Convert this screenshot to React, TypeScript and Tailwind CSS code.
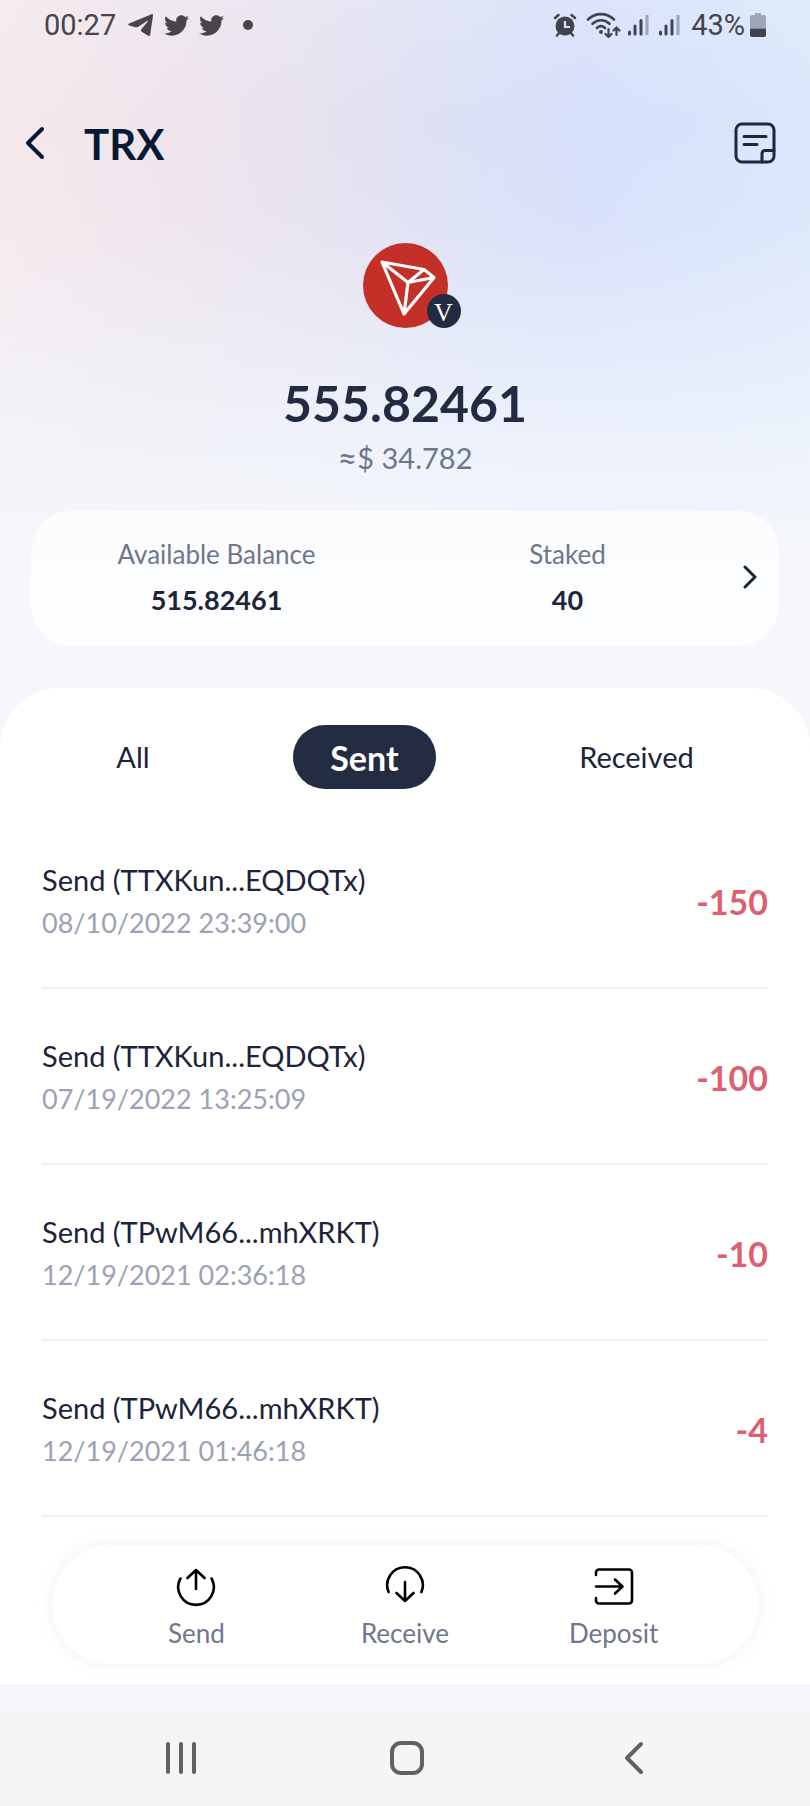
import React, { useState } from "react";
import { FaTwitter } from "react-icons/fa";

interface Transaction {
  address: string;
  date: string;
  amount: string;
}

const transactions: Transaction[] = [
  { address: "TTXKun...EQDQTx", date: "08/10/2022 23:39:00", amount: "-150" },
  { address: "TTXKun...EQDQTx", date: "07/19/2022 13:25:09", amount: "-100" },
  { address: "TPwM66...mhXRKT", date: "12/19/2021 02:36:18", amount: "-10" },
  { address: "TPwM66...mhXRKT", date: "12/19/2021 01:46:18", amount: "-4" },
];

const tabs = ["All", "Sent", "Received"];

function SignalIcon() {
  return (
    <svg width="22" height="24" viewBox="0 0 22 24" strokeWidth="3" strokeLinecap="round" stroke="currentColor">
      <path d="M2.5 19v2M8 13v8M14 7.500v13.500" />
      <path d="M20 2v20" opacity="0.4" strokeLinecap="butt" />
    </svg>
  );
}

function StatusBar() {
  return (
    <div className="flex h-[50px] items-center justify-between px-[44px] font-[Roboto,sans-serif] text-[29px] leading-none text-[#47454b]">
      <div className="flex items-center">
        <span>00:27</span>
        <svg className="ml-3" width="25" height="24" viewBox="0 0 25 24" fill="currentColor">
          <path d="M23.500 1.200c.9-.4 1.700.2 1.500 1.200l-2.800 19.400c-.1 1-1.200 1.400-2 .9l-6.400-3.900c-1.100-.7-1.200-2-.3-2.900l6.300-7.400c.5-.6-.1-1-.7-.6l-8.800 5.900c-1 .6-2 .7-3.100.4l-5.900-1.700c-1.400-.4-1.500-1.300-.1-2z" />
        </svg>
        <FaTwitter className="ml-[11px] size-[25px]" />
        <FaTwitter className="ml-[10px] size-[25px]" />
        <span className="ml-[19px] size-[10px] rounded-full bg-current" />
      </div>
      <div className="flex items-center text-[#41444e]">
        <svg width="24" height="24" viewBox="0 0 24 24" fill="currentColor" stroke="currentColor" strokeLinecap="round">
          <circle cx="12" cy="13" r="9.500" stroke="none" />
          <path d="M2 5l3.500-3M22 5l-3.500-3M6 20l-2 2.500M18 20l2 2.500" fill="none" strokeWidth="2.500" />
          <path d="M12 8v6h5" fill="none" stroke="#dce4f8" strokeWidth="2.200" strokeLinecap="butt" />
        </svg>
        <svg className="ml-[9px]" width="36" height="26" viewBox="0 0 36 26" fill="none" stroke="currentColor" strokeLinecap="round">
          <path d="M2 7.500C9.500.3 20.500.3 28 7.500M6.500 11.800c5-4.800 12-4.800 17 0M11 16c2.500-2.300 5.500-2.300 8 0" strokeWidth="2.600" />
          <circle cx="15" cy="20" r="2" fill="currentColor" stroke="none" />
          <path d="M22.500 17v8M19.500 22l3 3 3-3M30.500 23v-7.500M27.500 18.500l3-3 3 3" strokeWidth="2.200" />
        </svg>
        <span className="ml-[5px]">
          <SignalIcon />
        </span>
        <span className="ml-[9px]">
          <SignalIcon />
        </span>
        <span className="ml-[11px]">43%</span>
        <svg className="ml-[5px]" width="16" height="24" viewBox="0 0 16 24" fill="currentColor">
          <path d="M5 0h6v2h3a2 2 0 0 1 2 2v11.500H0V4a2 2 0 0 1 2-2h3z" opacity="0.4" />
          <path d="M0 15.500h16V22a2 2 0 0 1-2 2H2a2 2 0 0 1-2-2z" />
        </svg>
      </div>
    </div>
  );
}

function Header() {
  return (
    <header className="flex h-[186px] items-center justify-between pl-[24px] pr-[34px]">
      <div className="flex items-center gap-[38px]">
        <button aria-label="Back" className="cursor-pointer">
          <svg width="22" height="34" viewBox="0 0 22 34" fill="none" stroke="#071a33" strokeWidth="4" strokeLinecap="round" strokeLinejoin="round">
            <path d="M18 3L4 17l14 14" />
          </svg>
        </button>
        <h1 className="pt-[2px] text-[42px] font-bold leading-none text-[#071a33]">TRX</h1>
      </div>
      <button aria-label="Details" className="cursor-pointer">
        <svg width="42" height="42" viewBox="0 0 42 42" fill="none" stroke="#1d2740" strokeWidth="3" strokeLinecap="round" strokeLinejoin="round">
          <rect x="2" y="2" width="38" height="38" rx="6" />
          <path d="M10 14.500h22M10 22.500h13M28 40V31.500a3 3 0 0 1 3-3H40" />
        </svg>
      </button>
    </header>
  );
}

function TokenLogo() {
  return (
    <div className="relative size-[85px] rounded-full bg-[#c43027]">
      <svg width="85" height="85" viewBox="0 0 85 85" fill="none" stroke="#fff" strokeWidth="3.200" strokeLinejoin="round">
        <path d="M19 19l42 7.500 10 8L41 71zM19 19l26 20.500L71 34.500M45 39.500L61 26.500M45 39.500L41 71" />
      </svg>
      <span className="absolute -right-[13px] bottom-0 flex size-[34px] items-center justify-center rounded-full bg-[#222b42] pt-1 font-['Liberation_Serif',serif] text-[26px] leading-none text-white">
        V
      </span>
    </div>
  );
}

function Actions() {
  const iconProps = {
    width: 42,
    height: 42,
    viewBox: "0 0 42 42",
    fill: "none",
    stroke: "#000",
    strokeWidth: 2.6,
    strokeLinecap: "round" as const,
    strokeLinejoin: "round" as const,
  };

  return (
    <div className="mx-[52px] flex h-[119px] items-center justify-around rounded-full bg-white px-10 pt-[6px] text-[26px] leading-8 text-[#6d778b] shadow-[0_0_20px_rgba(0,0,0,0.06)]">
      <button className="flex w-40 cursor-pointer flex-col items-center gap-[9px]">
        <svg {...iconProps}>
          <path d="M5.400 12.500a17.800 17.800 0 1 0 31.200 0M21 23V4M12.500 12L21 4l8.500 8" />
        </svg>
        Send
      </button>
      <button className="flex w-40 cursor-pointer flex-col items-center gap-[9px]">
        <svg {...iconProps}>
          <path d="M4.600 26a17.800 17.800 0 1 1 32.800 0M21 16v19M12.500 27l8.500 8 8.500-8" />
        </svg>
        Receive
      </button>
      <button className="flex w-40 cursor-pointer flex-col items-center gap-[9px]">
        <svg {...iconProps}>
          <path d="M3 9V6.500a3 3 0 0 1 3-3h30a3 3 0 0 1 3 3v28a3 3 0 0 1-3 3H6a3 3 0 0 1-3-3V32M3 20.500h26M22 13.500l7.500 7-7.500 7" />
        </svg>
        Deposit
      </button>
    </div>
  );
}

function SystemNav() {
  return (
    <nav className="flex h-[100px] items-center justify-around bg-[#f5f5f5] pl-[68px] pr-[63px] pt-1">
      <button aria-label="Recent apps" className="flex w-10 cursor-pointer justify-center">
        <svg width="34" height="36" viewBox="0 0 34 36" fill="none" stroke="#616161" strokeWidth="4" strokeLinecap="round">
          <path d="M4 4v28M17 4v28M30 4v28" />
        </svg>
      </button>
      <button aria-label="Home" className="flex w-10 cursor-pointer justify-center">
        <svg width="34" height="34" viewBox="0 0 34 34" fill="none" stroke="#616161" strokeWidth="4">
          <rect x="2" y="2" width="30" height="30" rx="9" />
        </svg>
      </button>
      <button aria-label="Back" className="flex w-10 cursor-pointer justify-center">
        <svg width="20" height="34" viewBox="0 0 20 34" fill="none" stroke="#616161" strokeWidth="4" strokeLinecap="round" strokeLinejoin="round">
          <path d="M17 3L3 17l14 14" />
        </svg>
      </button>
    </nav>
  );
}

export default function App() {
  const [activeTab, setActiveTab] = useState<string>("Sent");

  return (
    <div className="min-h-screen bg-[#f6f7fa] bg-[linear-gradient(to_bottom,rgba(240,245,252,0.2),rgba(240,245,252,0)_120px,rgba(240,245,252,0.08)_220px,rgba(240,245,252,0.5)_350px,rgba(242,246,252,0.85)_460px,#f6f7fa_580px),linear-gradient(to_right,#f6e9ed,#efe4ec_22%,#e6e2f0_40%,#dde1f5_55%,#d7e0fa_72%,#d8e3fb_85%,#dbe7fb)] font-[Lato,sans-serif] text-[#1c2439]">
      <StatusBar />
      <Header />

      <main>
        <section className="flex flex-col items-center pt-[7px]">
          <TokenLogo />
          <p className="mt-[45px] text-[50px] font-bold leading-[60px] text-[#222b42]">555.82461</p>
          <p className="flex h-[50px] items-center text-[29px] leading-[50px] text-[#6d778b]">
            <span className="text-[34px]">≈</span>$ 34.782
          </p>
        </section>

        <section className="mx-[31px] mt-[28px] flex h-[135px] items-center rounded-[40px] bg-white/70 pb-1 pl-[10px] pr-[22px]">
          <div className="grid flex-1 grid-cols-2 text-center leading-[45px]">
            <div>
              <p className="text-[26px] text-[#6d778b]">Available Balance</p>
              <p className="text-[27px] font-bold">515.82461</p>
            </div>
            <div>
              <p className="text-[26px] text-[#6d778b]">Staked</p>
              <p className="text-[27px] font-bold">40</p>
            </div>
          </div>
          <button aria-label="Balance details" className="cursor-pointer">
            <svg width="14" height="26" viewBox="0 0 14 26" fill="none" stroke="#1c2439" strokeWidth="3" strokeLinecap="round" strokeLinejoin="round">
              <path d="M2 3l10 10L2 23" />
            </svg>
          </button>
        </section>

        <section className="mt-[42px] rounded-t-[60px] bg-white pb-5 pt-[37px]">
          <div className="flex items-center justify-around px-[26px]">
            {tabs.map((tab) => (
              <button
                key={tab}
                onClick={() => setActiveTab(tab)}
                className={`h-[64px] cursor-pointer rounded-full px-[37px] ${
                  tab === activeTab
                    ? "bg-[#242c42] text-[34px] font-bold text-white"
                    : "text-[29px]"
                }`}
              >
                {tab}
              </button>
            ))}
          </div>

          <ul className="mt-6 px-[42px]">
            {transactions.map(({ address, date, amount }) => (
              <li
                key={date}
                className="flex h-[176px] items-center justify-between border-b-2 border-[#f1f1f3] pt-[2px]"
              >
                <div className="leading-[43px]">
                  <p className="text-[29px]">Send ({address})</p>
                  <p className="text-[27px] text-[#9aa2b3]">{date}</p>
                </div>
                <span className="text-[34px] font-bold text-[#dc6072]">{amount}</span>
              </li>
            ))}
          </ul>

          <div className="mt-[28px]">
            <Actions />
          </div>
        </section>
      </main>

      <div className="h-[22px]" />
      <SystemNav />
    </div>
  );
}
